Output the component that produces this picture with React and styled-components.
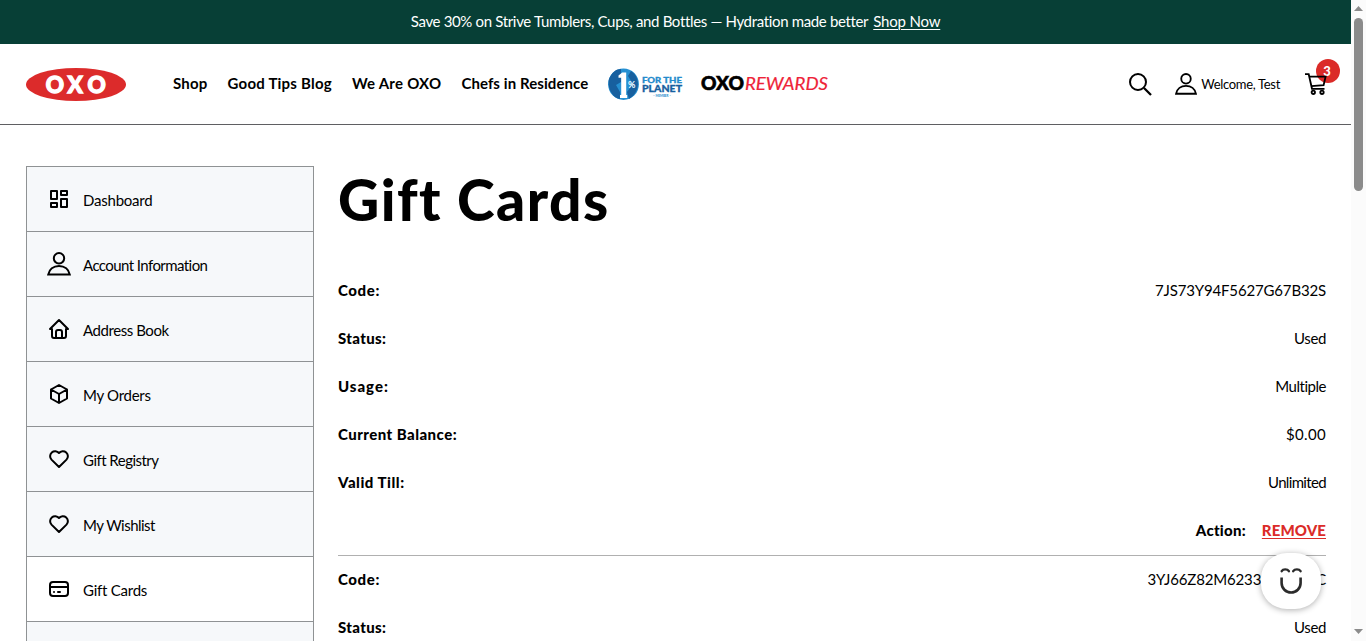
import React from "react";
import styled, { createGlobalStyle } from "styled-components";

const GlobalStyle = createGlobalStyle`
  * { box-sizing: border-box; }
  html, body { margin: 0; padding: 0; height: 641px; overflow: hidden; background: #fff; }
  body { font-family: Lato, "Liberation Sans", sans-serif; font-size: 15px; color: #000; }
`;

const Window = styled.div`
  display: flex;
  width: 1366px;
  height: 641px;
  overflow: hidden;
`;

const Page = styled.div`
  flex: 1;
  min-width: 0;
  height: 641px;
  overflow: hidden;
`;

const Text = styled.span`
  white-space: nowrap;
  letter-spacing: ${(p) => p.$track || 0}px;
`;

const Banner = styled.div`
  height: 44px;
  display: flex;
  justify-content: center;
  align-items: center;
  gap: 5px;
  padding-bottom: 2px;
  background: #073f36;
  color: #fff;
  line-height: 20px;
`;

const BannerLink = styled.a`
  color: #fff;
  letter-spacing: -0.19px;
  text-decoration: underline;
  text-decoration-thickness: 1px;
  text-underline-offset: 2px;
`;

const Header = styled.header`
  height: 81px;
  display: flex;
  align-items: center;
  padding: 0 24px 0 26px;
  border-bottom: 1px solid #5f5f62;
`;

const Nav = styled.nav`
  display: flex;
  align-items: center;
  gap: 20px;
  margin-left: 47px;
  padding-bottom: 2px;
  font-weight: 700;
  line-height: 20px;
`;

const Partners = styled.div`
  display: flex;
  align-items: center;
  gap: 17px;
  margin-left: 20px;
`;

const Tools = styled.div`
  display: flex;
  align-items: center;
  margin-left: auto;
`;

const Account = styled.div`
  display: flex;
  align-items: center;
  gap: 4px;
  margin: 0 25px 0 23px;
  font-size: 13px;
  line-height: 20px;
`;

const Cart = styled.div`
  position: relative;
  width: 22px;
  height: 22px;
  svg { position: relative; display: block; }
`;

const Count = styled.span`
  position: absolute;
  left: 11px;
  top: -14px;
  width: 24px;
  height: 24px;
  border-radius: 50%;
  background: #db2b28;
  color: #fff;
  font-size: 13px;
  font-weight: 900;
  line-height: 24px;
  text-align: center;
  padding-right: 2px;
`;

const Content = styled.div`
  display: flex;
  align-items: flex-start;
  gap: 24px;
  padding: 41px 25px 0 26px;
`;

const Sidebar = styled.aside`
  width: 288px;
  flex: none;
  border: 1px solid #8f9294;
`;

const MenuItem = styled.a`
  height: 65px;
  display: flex;
  align-items: center;
  gap: 12px;
  padding: 0 20px;
  border-bottom: 1px solid #8f9294;
  background: ${(p) => (p.$active ? "#fff" : "#f6f8fa")};
  line-height: 20px;
  svg { flex: none; margin-bottom: 1px; }
  span { padding-top: 2px; }
`;

const Main = styled.main`
  flex: 1;
  min-width: 0;
`;

const Title = styled.h1`
  margin: 0 0 35px;
  height: 66px;
  line-height: 66px;
  font-size: 57px;
  font-weight: 900;
  letter-spacing: 1.45px;
`;

const Card = styled.section`
  border-bottom: 1px solid #b0b0b0;
`;

const Row = styled.div`
  height: 48px;
  display: flex;
  align-items: center;
  justify-content: ${(p) => (p.$end ? "flex-end" : "space-between")};
  gap: 16px;
  padding-bottom: 2px;
  line-height: 20px;
`;

const Label = styled(Text)`
  font-weight: 900;
`;

const Remove = styled.a`
  color: #db2b28;
  font-weight: 900;
  letter-spacing: 0.1px;
  text-decoration: underline;
  text-decoration-thickness: 1px;
  text-underline-offset: 2px;
`;

const Chat = styled.button`
  position: fixed;
  left: 1261px;
  top: 553px;
  width: 60px;
  height: 56px;
  padding: 0;
  border: 0;
  border-radius: 26px / 25px;
  background: #fff;
  box-shadow: 0 1px 6px rgba(0, 0, 0, 0.32);
  svg { display: block; }
`;

const Scrollbar = styled.div`
  width: 15px;
  height: 641px;
  flex: none;
  display: flex;
  flex-direction: column;
  align-items: center;
  background: #fbfbfb;
`;

const Thumb = styled.div`
  width: 9px;
  height: 173px;
  margin-bottom: auto;
  border-radius: 5px;
  background: #8b8b8b;
`;

const Arrow = ({ down }) => (
  <svg width="15" height="18" viewBox="0 0 15 18" fill="#8b8b8b">
    <path d={down ? "M3 6h9l-4.5 5z" : "M3 11h9L7.5 6z"} />
  </svg>
);

const Logo = () => (
  <svg width="100" height="33" viewBox="0 0 100 33">
    <ellipse cx="50" cy="16.5" rx="50" ry="16.5" fill="#dc2b2b" />
    <g fontFamily="Lato, sans-serif" fontSize="22.5" fontWeight="900" fill="#fff" stroke="#fff" strokeWidth="1.3">
      <text y="24.6" x="19.8 41.5 61.5">OXO</text>
    </g>
  </svg>
);

const PlanetLogo = () => (
  <svg width="75" height="33" viewBox="0 0 75 33" fontFamily="Lato, sans-serif">
    <ellipse cx="15.5" cy="16.2" rx="15.4" ry="15.8" fill="#2590d2" />
    <path d="M1 11C4 4 8 1 13 1v13l-5 3 4 7v7C4 30-1 19 1 11Zm22-8c10 6 9 22-2 28l-2-7 6-8-5-8Z" fill="#17609f" />
    <path d="M10.5 7.5 14.2 4.5h4V27h1v3H12v-3h1.2V9.8h-2.7z" fill="#fff" />
    <text x="20" y="19.5" fontSize="9" fontWeight="700" fill="#fff">%</text>
    <text x="34" y="14.8" textLength="40" lengthAdjust="spacingAndGlyphs" fontSize="8.3" fontWeight="900" fill="#258bcc" stroke="#258bcc" strokeWidth=".3">FOR THE</text>
    <text x="34" y="23.5" textLength="40" lengthAdjust="spacingAndGlyphs" fontSize="9.6" fontWeight="900" fill="#17609f" stroke="#17609f" strokeWidth=".3">PLANET</text>
    <text x="45" y="28.8" textLength="18" lengthAdjust="spacingAndGlyphs" fontSize="3.2" fontWeight="700" fill="#258bcc">– MEMBER –</text>
  </svg>
);

const RewardsLogo = () => (
  <svg width="128" height="22" viewBox="0 0 128 22" fontFamily="Lato, sans-serif" fontSize="18">
    <text x="1" y="17.1" textLength="43" lengthAdjust="spacingAndGlyphs" fontWeight="900" stroke="#000" strokeWidth=".6">OXO</text>
    <text x="45" y="17.1" textLength="83" lengthAdjust="spacingAndGlyphs" fontStyle="italic" fill="#ee2338" stroke="#ee2338" strokeWidth=".2">REWARDS</text>
  </svg>
);

const SearchIcon = () => (
  <svg width="23" height="23" viewBox="0 0 23 23" fill="none" stroke="#000" strokeWidth="2">
    <circle cx="9" cy="9" r="8" />
    <path d="m15 15 7 7" strokeWidth="2.3" />
  </svg>
);

const UserIcon = ({ size = 24 }) => (
  <svg width={size} height={size} viewBox="0 0 24 24" fill="none" stroke="#000" strokeWidth="2">
    <circle cx="12" cy="6.3" r="5.2" />
    <path d="M1.2 22.6C2.2 17.4 6.4 14 12 14s9.8 3.4 10.8 8.6Z" />
  </svg>
);

const CartIcon = () => (
  <svg width="22" height="22" viewBox="0 0 22 22" fill="none" stroke="#000" strokeWidth="1.8">
    <path d="M0 1.2h3.7L7 15.8h12.5" />
    <path d="M4.3 3.6h16.3l-2 8.5-12.3 1" />
    <circle cx="8.3" cy="19.3" r="1.7" />
    <circle cx="17" cy="19.3" r="1.7" />
  </svg>
);

const Icon24 = ({ children }) => (
  <svg width="24" height="24" viewBox="0 0 24 24" fill="none" stroke="#000" strokeWidth="2" strokeLinejoin="round" strokeLinecap="round">
    {children}
  </svg>
);

const DashboardIcon = () => (
  <Icon24>
    <path d="M4 4h6v8H4zM14 4h6v4h-6zM4 16h6v4H4zM14 12h6v8h-6z" />
  </Icon24>
);
const HomeIcon = () => (
  <Icon24>
    <path d="M5 12H3l9-9 9 9h-2M5 12v7a2 2 0 0 0 2 2h10a2 2 0 0 0 2-2v-7M9 21v-6a2 2 0 0 1 2-2h2a2 2 0 0 1 2 2v6" />
  </Icon24>
);
const BoxIcon = () => (
  <Icon24>
    <path d="m12 3 8 4.5v9L12 21l-8-4.5v-9ZM12 12l8-4.5M12 12v9M12 12 4 7.5" />
  </Icon24>
);
const HeartIcon = () => (
  <Icon24>
    <path d="M19.5 12.6 12 20l-7.5-7.4A5 5 0 1 1 12 6a5 5 0 1 1 7.5 6.6" />
  </Icon24>
);
const CardIcon = () => (
  <Icon24>
    <rect x="3" y="5" width="18" height="14" rx="3" />
    <path d="M3 10h18M7 15h.01M11 15h2" />
  </Icon24>
);

const SmileIcon = () => (
  <svg width="60" height="56" viewBox="0 0 60 56" fill="none" stroke="#2b2b2b">
    <path d="M20.6 24.5V30a9.5 9.5 0 0 0 19 0v-5.5" strokeWidth="2.6" />
    <path d="M20.7 18.2c1.4-2.5 5.6-2.5 7.2 0M32.2 18.2c1.6-2.5 5.8-2.5 7.4 0" strokeWidth="2.4" strokeLinecap="round" />
  </svg>
);

const navLinks = [
  ["Shop", 0.2],
  ["Good Tips Blog", 0.23],
  ["We Are OXO", 0.25],
  ["Chefs in Residence", 0.08],
];

const menu = [
  ["Dashboard", DashboardIcon, -0.22],
  ["Account Information", UserIcon, -0.57],
  ["Address Book", HomeIcon, -0.44],
  ["My Orders", BoxIcon, -0.29],
  ["Gift Registry", HeartIcon, -0.52],
  ["My Wishlist", HeartIcon, -0.53],
  ["Gift Cards", CardIcon, -0.24],
  ["Stored Payment Methods", CardIcon, -0.4],
];

const cards = [
  ["7JS73Y94F5627G67B32S", "Used", "Multiple", "$0.00", "Unlimited"],
  ["3YJ66Z82M6233F47K9DC", "Used", "Multiple", "$0.00", "Unlimited"],
];

const fields = [
  ["Code:", 0.6, -0.16],
  ["Status:", 0.36, -0.37],
  ["Usage:", 0.97, -0.48],
  ["Current Balance:", 0.46, 0.33],
  ["Valid Till:", 0.52, -0.66],
];

export default function App() {
  return (
    <Window>
      <GlobalStyle />
      <Page>
        <Banner>
          <Text $track={-0.34}>Save 30% on Strive Tumblers, Cups, and Bottles — Hydration made better</Text>
          <BannerLink>Shop Now</BannerLink>
        </Banner>
        <Header>
          <Logo />
          <Nav>
            {navLinks.map(([name, track]) => (
              <Text key={name} $track={track}>{name}</Text>
            ))}
          </Nav>
          <Partners>
            <PlanetLogo />
            <RewardsLogo />
          </Partners>
          <Tools>
            <SearchIcon />
            <Account>
              <UserIcon size={22} />
              <Text $track={-0.32}>Welcome, Test</Text>
            </Account>
            <Cart>
              <Count>3</Count>
              <CartIcon />
            </Cart>
          </Tools>
        </Header>
        <Content>
          <Sidebar>
            {menu.map(([name, Icon, track]) => (
              <MenuItem key={name} $active={name === "Gift Cards"}>
                <Icon />
                <Text $track={track}>{name}</Text>
              </MenuItem>
            ))}
          </Sidebar>
          <Main>
            <Title>Gift Cards</Title>
            {cards.map((values) => (
              <Card key={values[0]}>
                {fields.map(([label, labelTrack, valueTrack], i) => (
                  <Row key={label}>
                    <Label $track={labelTrack}>{label}</Label>
                    <Text $track={valueTrack}>{values[i]}</Text>
                  </Row>
                ))}
                <Row $end>
                  <Label $track={0.25}>Action:</Label>
                  <Remove>REMOVE</Remove>
                </Row>
              </Card>
            ))}
          </Main>
        </Content>
      </Page>
      <Scrollbar>
        <Arrow />
        <Thumb />
        <Arrow down />
      </Scrollbar>
      <Chat aria-label="Open chat">
        <SmileIcon />
      </Chat>
    </Window>
  );
}
